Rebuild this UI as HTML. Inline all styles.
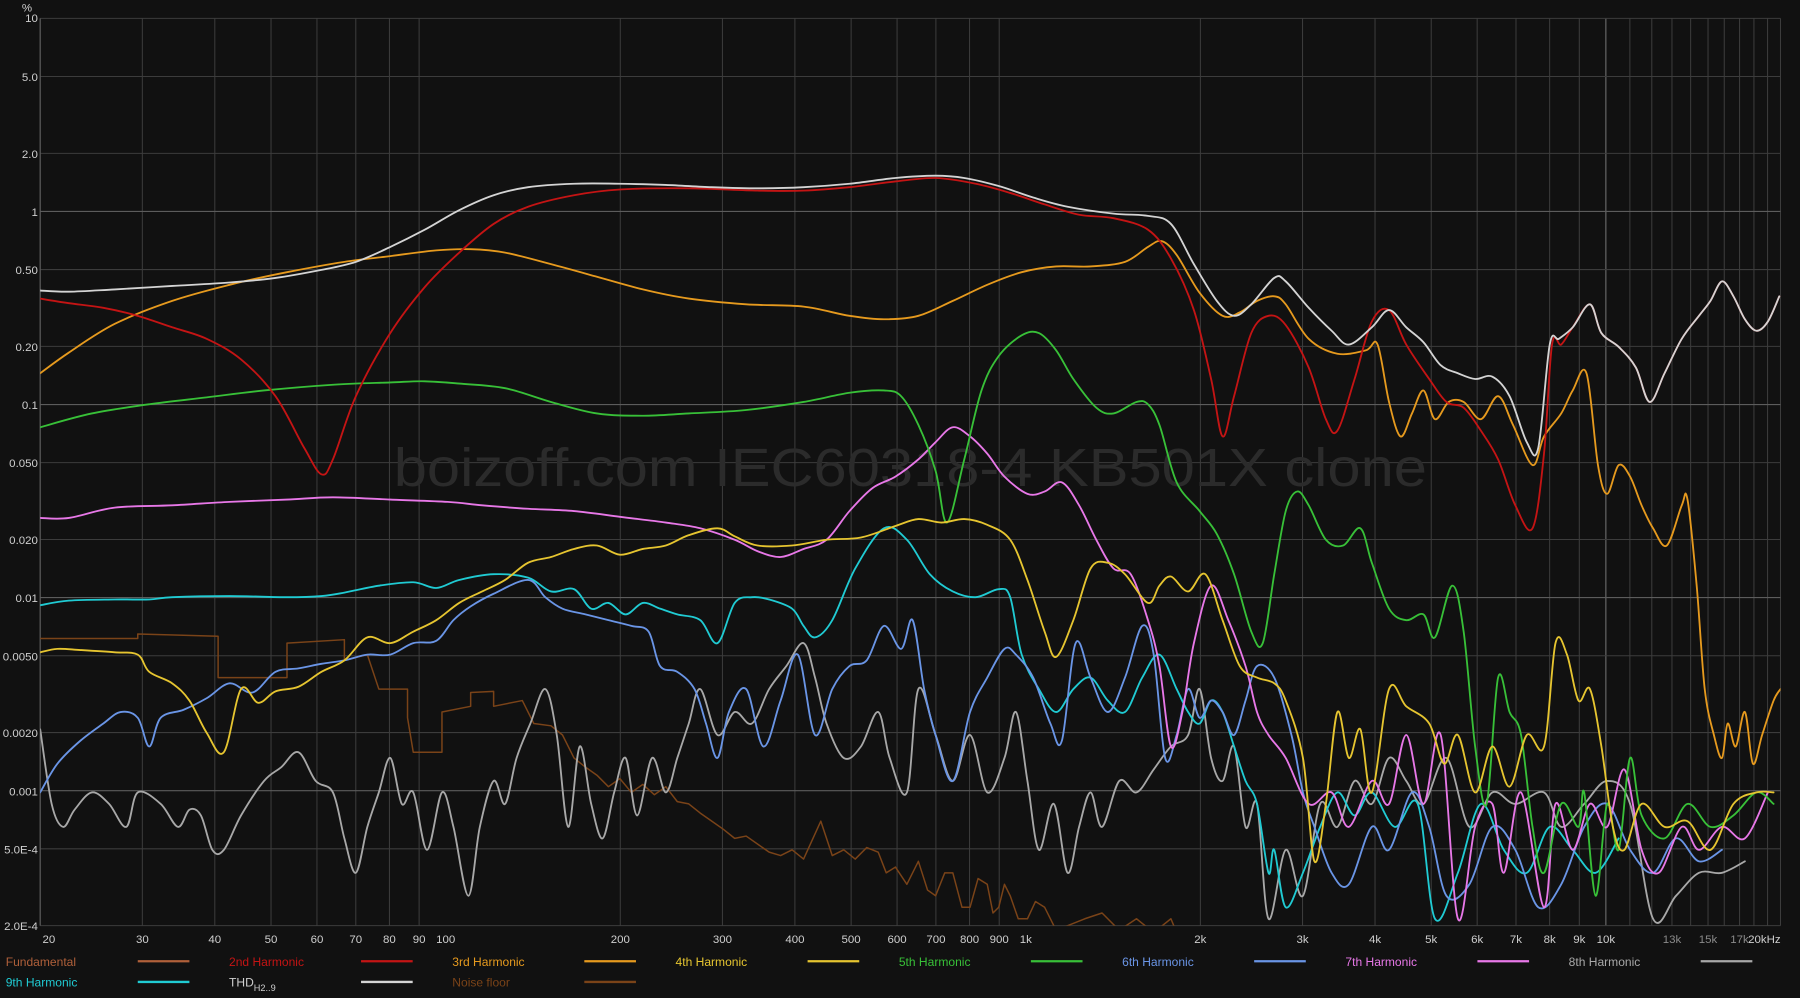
<!DOCTYPE html>
<html><head><meta charset="utf-8"><style>
html,body{margin:0;padding:0;background:#111;overflow:hidden}
svg{display:block}
text{font-family:"Liberation Sans",sans-serif}
</style></head><body>
<svg id="s" width="1800" height="998" viewBox="0 0 1568 869" preserveAspectRatio="none" xmlns="http://www.w3.org/2000/svg">
<rect width="1568" height="869" fill="#111"/>
<defs><clipPath id="c"><rect x="35" y="16" width="1516" height="790"/></clipPath></defs>
<g id="grid"></g>
<text x="343" y="423" font-size="47" textLength="900" lengthAdjust="spacingAndGlyphs" fill="#2b2b2b">boizoff.com IEC60318-4 KB501X clone</text>
<g id="curves" clip-path="url(#c)" fill="none" stroke-width="1.6" stroke-linejoin="round" stroke-linecap="round"></g>
<g id="labels" font-size="10" fill="#cfcfcf"></g>
<g id="legend" font-size="10.5"></g>
</svg>
<script>
var NS="http://www.w3.org/2000/svg";
function el(t,a,p,txt){var e=document.createElementNS(NS,t);for(var k in a)e.setAttribute(k,a[k]);if(txt!=null)e.textContent=txt;p.appendChild(e);return e;}
var L=35,R=1551,T=16,B=806;
function X(f){return L+Math.log10(f/20)/3*(R-L);}
function Y(v){return T+Math.log10(10/v)*(B-T)/4.699;}
var g=document.getElementById('grid'),lb=document.getElementById('labels');
var fs=[];[10,100,1000].forEach(function(d){for(var i=2;i<=9;i++){fs.push(i*d);}});fs.push(10000,20000);
for(var f=11000;f<20000;f+=1000)fs.push(f);
fs.forEach(function(f){var x=X(f);var maj=(f==100||f==1000||f==10000);el('line',{x1:x,x2:x,y1:T,y2:B,stroke:maj?'#6a6a6a':'#3c3c3c','stroke-width':maj?1:0.9},g);});
var ys=[10,5,2,1,0.5,0.2,0.1,0.05,0.02,0.01,0.005,0.002,0.001,0.0005,0.0002];
var yl=['10','5.0','2.0','1','0.50','0.20','0.1','0.050','0.020','0.01','0.0050','0.0020','0.001','5.0E-4','2.0E-4'];
ys.forEach(function(v,i){var y=Y(v);var maj=(v==1||v==0.1||v==0.01||v==0.001);el('line',{x1:L,x2:R,y1:y,y2:y,stroke:maj?'#5c5c5c':'#3c3c3c','stroke-width':maj?1:0.9},g);
 el('text',{x:33,y:(i==0?y+3:y+4),'text-anchor':'end'},lb,yl[i]);});
el('line',{x1:L,x2:L,y1:T,y2:B,stroke:'#5c5c5c'},g);
el('text',{x:28,y:10,'text-anchor':'end'},lb,'%');
var xl=[[20,'20'],[30,'30'],[40,'40'],[50,'50'],[60,'60'],[70,'70'],[80,'80'],[90,'90'],[100,'100'],[200,'200'],[300,'300'],[400,'400'],[500,'500'],[600,'600'],[700,'700'],[800,'800'],[900,'900'],[1000,'1k'],[2000,'2k'],[3000,'3k'],[4000,'4k'],[5000,'5k'],[6000,'6k'],[7000,'7k'],[8000,'8k'],[9000,'9k'],[10000,'10k'],[13000,'13k'],[15000,'15k'],[17000,'17k'],[20000,'20kHz']];
xl.forEach(function(a){var x=X(a[0]);var dim=(a[0]==13000||a[0]==15000||a[0]==17000);el('text',{x:a[0]==20000?x-14:(a[0]==20?x+2:x),y:821,'text-anchor':a[0]==20?'start':'middle',fill:dim?'#8a8a8a':'#cfcfcf'},lb,a[1]);});
function path(pts){var d='M'+pts[0][0]+','+pts[0][1];for(var i=0;i<pts.length-1;i++){var p0=pts[i-1]||pts[i],p1=pts[i],p2=pts[i+1],p3=pts[i+2]||p2;var t=6;
d+=' C'+(p1[0]+(p2[0]-p0[0])/t).toFixed(1)+','+(p1[1]+(p2[1]-p0[1])/t).toFixed(1)+' '+(p2[0]-(p3[0]-p1[0])/t).toFixed(1)+','+(p2[1]-(p3[1]-p1[1])/t).toFixed(1)+' '+p2[0]+','+p2[1];}return d;}
function P(s){return s.trim().split(/\)\s*,?\s*\(/).map(function(q){q=q.replace(/[()]/g,'').split(',');return [+q[0],+q[1]];});}
var cv=document.getElementById('curves');
function add(col,s,poly){var pts=P(s);if(poly){el('polyline',{points:pts.map(function(p){return p.join(',')}).join(' '),stroke:col,'stroke-width':1.3},cv);}else el('path',{d:path(pts),stroke:col},cv);}
add('#7a4318','(35,556),(120,556),(120,552),(190,554),(190,590),(250,590),(250,560),(300,557),(300,575),(320,570),(330,600),(355,600),(355,625),(360,655),(385,655),(385,620),(410,615),(410,603),(430,602),(430,615),(455,610),(465,630),(480,632),(490,640),(500,660),(510,668),(520,675),(530,685),(540,678),(550,690),(560,683),(570,692),(580,685),(590,698),(600,700),(610,708),(620,715),(630,722),(640,730),(650,728),(660,735),(670,742),(680,745),(690,740),(700,748),(715,715),(725,745),(735,740),(745,748),(755,738),(765,742),(772,760),(780,755),(790,770),(800,750),(808,775),(815,780),(823,760),(830,760),(838,790),(845,790),(852,765),(860,770),(865,795),(870,790),(875,770),(880,780),(887,800),(895,800),(902,785),(910,790),(920,810),(930,806),(945,800),(960,795),(975,810),(990,800),(1005,812),(1020,800),(1025,812)',true);
add('#a8a8a8','(35,635),(45,700),(55,720),(65,705),(80,690),(95,700),(110,720),(120,690),(140,700),(155,720),(165,705),(175,710),(185,740),(195,740),(210,710),(230,680),(245,668),(260,655),(275,680),(290,690),(300,730),(310,760),(320,720),(330,690),(340,660),(350,700),(360,690),(372,740),(385,690),(395,720),(408,780),(418,720),(430,680),(440,700),(450,660),(462,630),(475,600),(485,640),(495,720),(505,650),(515,700),(525,730),(535,690),(545,660),(555,710),(568,660),(580,690),(590,660),(600,630),(610,600),(625,640),(640,620),(655,630),(670,600),(685,580),(700,560),(710,590),(720,630),(735,660),(750,650),(765,620),(775,660),(790,690),(800,600),(815,640),(830,680),(845,640),(860,690),(875,660),(885,620),(895,680),(905,740),(918,700),(930,760),(940,720),(950,690),(960,720),(975,680),(990,690),(1005,670),(1020,650),(1035,640),(1045,600),(1055,660),(1065,680),(1075,650),(1085,720),(1095,700),(1105,800),(1120,740),(1135,780),(1150,700),(1165,720),(1180,680),(1195,700),(1210,660),(1225,680),(1240,700),(1260,660),(1280,720),(1300,690),(1320,700),(1345,690),(1360,720),(1380,700),(1400,680),(1420,700),(1440,800),(1460,780),(1480,760),(1500,760),(1520,750)');
add('#20cbd3','(35,527),(60,523),(100,522),(130,522),(150,520),(200,519),(250,520),(280,519),(300,516),(330,510),(360,507),(380,512),(400,505),(430,500),(460,503),(480,515),(500,513),(515,530),(530,525),(545,535),(560,525),(575,530),(590,535),(610,540),(625,560),(640,525),(655,520),(670,522),(690,530),(700,545),(710,555),(725,540),(745,495),(770,460),(790,470),(810,500),(830,515),(850,520),(870,513),(880,520),(890,570),(905,600),(920,620),(935,600),(950,590),(965,610),(980,620),(995,590),(1010,570),(1025,600),(1035,620),(1045,630),(1055,610),(1065,620),(1075,650),(1085,680),(1095,700),(1105,760),(1110,740),(1120,790),(1135,760),(1150,720),(1165,690),(1180,710),(1195,690),(1215,720),(1235,700),(1250,800),(1270,760),(1290,700),(1310,740),(1330,760),(1350,720),(1370,740),(1390,760),(1410,730)');
add('#6a95e6','(35,690),(50,665),(70,645),(90,630),(105,620),(120,625),(130,650),(140,625),(160,618),(180,608),(200,595),(220,603),(240,585),(260,582),(280,578),(300,575),(320,570),(340,570),(360,560),(380,558),(395,540),(410,528),(430,517),(460,505),(475,520),(490,530),(510,535),(530,540),(550,545),(565,550),(575,580),(590,585),(605,600),(615,630),(625,660),(635,620),(650,600),(665,650),(680,610),(695,570),(710,640),(725,600),(740,580),(755,575),(770,545),(785,565),(795,540),(805,600),(815,640),(830,680),(845,620),(860,590),(875,565),(885,570),(900,590),(915,630),(925,645),(937,560),(950,590),(965,620),(980,590),(995,545),(1005,570),(1015,660),(1025,640),(1035,600),(1045,625),(1055,610),(1065,620),(1075,640),(1085,610),(1095,580),(1110,590),(1125,640),(1135,690),(1145,720),(1160,760),(1175,770),(1195,720),(1210,740),(1230,690),(1245,720),(1260,780),(1280,770),(1300,720),(1320,740),(1340,790),(1360,770),(1380,720),(1400,700),(1420,740),(1440,760),(1460,730),(1480,750),(1500,740)');
add('#e878e8','(35,451),(60,451),(100,442),(150,440),(200,437),(250,435),(290,433),(340,435),(390,437),(420,440),(460,443),(500,445),(540,450),(580,455),(610,460),(640,470),(660,480),(680,485),(700,478),(720,470),(740,445),(760,425),(780,415),(800,400),(815,385),(830,372),(845,380),(860,395),(875,415),(895,430),(910,428),(925,420),(940,440),(955,470),(970,495),(985,500),(1000,540),(1010,580),(1020,650),(1030,620),(1040,560),(1055,510),(1070,540),(1085,580),(1095,620),(1105,640),(1120,660),(1140,700),(1160,690),(1175,720),(1195,680),(1210,700),(1225,640),(1240,700),(1255,640),(1270,800),(1285,720),(1300,700),(1310,760),(1325,690),(1345,790),(1355,700),(1370,740),(1385,700),(1400,720),(1415,670),(1430,740),(1445,760),(1465,720),(1480,740),(1500,720),(1520,730),(1540,690)');
add('#38c038','(35,372),(80,360),(130,352),(180,346),(230,340),(290,335),(340,333),(370,332),(400,334),(440,338),(480,350),(520,360),(560,362),(600,360),(650,357),(700,350),(740,342),(770,340),(785,345),(800,370),(815,410),(825,455),(840,400),(855,340),(870,310),(890,292),(905,290),(920,305),(935,330),(955,355),(970,360),(990,350),(1000,352),(1010,370),(1025,420),(1045,445),(1060,465),(1075,500),(1090,550),(1100,560),(1110,500),(1120,445),(1130,428),(1140,440),(1155,470),(1170,475),(1185,460),(1195,490),(1210,530),(1225,540),(1240,535),(1250,555),(1265,510),(1275,550),(1285,650),(1295,700),(1305,590),(1315,620),(1325,640),(1335,720),(1345,760),(1360,700),(1375,720),(1380,690),(1390,780),(1400,700),(1410,740),(1420,660),(1430,710),(1450,730),(1470,700),(1490,720),(1510,710),(1530,690),(1545,700)');
add('#e6c530','(35,568),(50,565),(70,566),(100,568),(120,570),(130,585),(150,595),(165,610),(180,638),(195,655),(210,600),(225,612),(240,602),(260,598),(280,585),(300,575),(320,555),(340,560),(360,550),(380,540),(400,525),(420,515),(440,505),(460,490),(480,485),(500,478),(520,475),(540,483),(560,478),(580,475),(600,466),(625,460),(640,467),(660,475),(690,475),(720,470),(750,468),(780,458),(800,452),(820,455),(840,452),(860,457),(880,470),(895,505),(910,550),(920,572),(935,540),(950,495),(965,490),(980,500),(1000,525),(1010,510),(1020,502),(1035,515),(1050,500),(1065,540),(1080,580),(1095,590),(1110,595),(1120,610),(1135,660),(1145,750),(1155,700),(1165,620),(1175,660),(1185,635),(1195,690),(1210,600),(1225,615),(1245,630),(1258,665),(1270,640),(1285,690),(1300,650),(1315,685),(1330,640),(1345,650),(1355,560),(1365,570),(1375,610),(1385,600),(1395,650),(1405,720),(1415,740),(1430,700),(1450,720),(1470,715),(1490,740),(1510,700),(1530,690),(1545,690)');
add('#e69a1e','(35,325),(60,307),(100,282),(150,262),(200,248),(250,237),(300,228),(340,223),(380,218),(410,217),(440,220),(480,230),(520,241),(560,252),(600,260),(650,265),(700,267),(740,275),(770,278),(800,275),(830,262),(860,248),(890,237),(920,232),(950,232),(980,228),(1000,215),(1012,210),(1025,222),(1045,255),(1065,275),(1080,272),(1095,262),(1110,258),(1120,265),(1140,295),(1165,308),(1190,305),(1200,300),(1210,350),(1220,380),(1230,360),(1240,340),(1250,365),(1262,350),(1275,350),(1290,365),(1305,345),(1318,370),(1335,405),(1345,380),(1360,360),(1370,340),(1382,325),(1392,405),(1400,430),(1410,405),(1420,415),(1430,440),(1440,460),(1452,475),(1465,440),(1470,435),(1478,510),(1485,600),(1493,640),(1500,660),(1505,630),(1512,650),(1520,620),(1527,665),(1535,640),(1545,610),(1551,600)');
add('#c41414','(35,260),(60,264),(90,268),(120,275),(150,285),(180,295),(210,313),(240,345),(265,390),(280,413),(290,400),(310,345),(340,290),(370,250),(400,220),(430,195),(460,180),(500,170),(540,165),(600,164),(660,166),(700,166),(740,163),(780,158),(815,155),(850,160),(880,168),(910,178),(940,187),(970,190),(1000,200),(1020,225),(1040,270),(1055,330),(1065,380),(1075,345),(1090,290),(1105,275),(1120,283),(1140,320),(1155,365),(1165,375),(1180,330),(1195,280),(1210,270),(1225,300),(1245,330),(1260,350),(1275,355),(1290,375),(1305,400),(1320,440),(1335,460),(1345,395),(1352,300),(1360,300),(1370,285),(1385,265),(1395,290),(1410,302),(1425,320),(1437,350),(1450,325),(1465,295),(1480,275),(1490,262),(1500,245),(1510,258),(1520,278),(1530,288),(1540,280),(1550,258)');
add('#d4d4d4','(35,253),(60,254),(100,252),(150,249),(200,246),(240,242),(280,235),(310,228),(340,215),(370,200),(400,183),(430,170),(460,163),(500,160),(540,160),(580,161),(620,163),(660,164),(700,163),(740,160),(780,155),(815,153),(840,155),(870,162),(900,172),(930,180),(970,186),(1000,188),(1020,195),(1040,230),(1060,262),(1075,275),(1090,265),(1110,242),(1120,245),(1140,268),(1160,288),(1175,300),(1195,285),(1210,270),(1225,285),(1240,298),(1255,318),(1270,325),(1285,330),(1300,328),(1315,345),(1330,385),(1340,390),(1350,300),(1358,295),(1370,285),(1385,265),(1395,290),(1410,302),(1425,320),(1437,350),(1450,325),(1465,295),(1480,275),(1490,262),(1500,245),(1510,258),(1520,278),(1530,288),(1540,280),(1550,258)');
var lg=document.getElementById('legend');
var items=[['Fundamental','#b0603a'],['2nd Harmonic','#c41414'],['3rd Harmonic','#e69a1e'],['4th Harmonic','#e6c530'],['5th Harmonic','#38c038'],['6th Harmonic','#6a95e6'],['7th Harmonic','#e878e8'],['8th Harmonic','#a8a8a8'],['9th Harmonic','#20cbd3'],['THD','#d4d4d4'],['Noise floor','#7a4318']];
items.forEach(function(it,i){var col=i<8?i:i-8,row=i<8?0:1;var x=5+col*194.5,y=841+row*18;
 var t=el('text',{x:x,y:y,fill:it[1]},lg,it[0]);
 if(it[0]=='THD'){t.setAttribute('fill','#cfcfcf');var ts=el('tspan',{'font-size':'8',dy:'4'},t,'H2..9');}
 el('line',{x1:x+115,x2:x+160,y1:y-4,y2:y-4,stroke:it[1],'stroke-width':2},lg);});
</script>
</body></html>
